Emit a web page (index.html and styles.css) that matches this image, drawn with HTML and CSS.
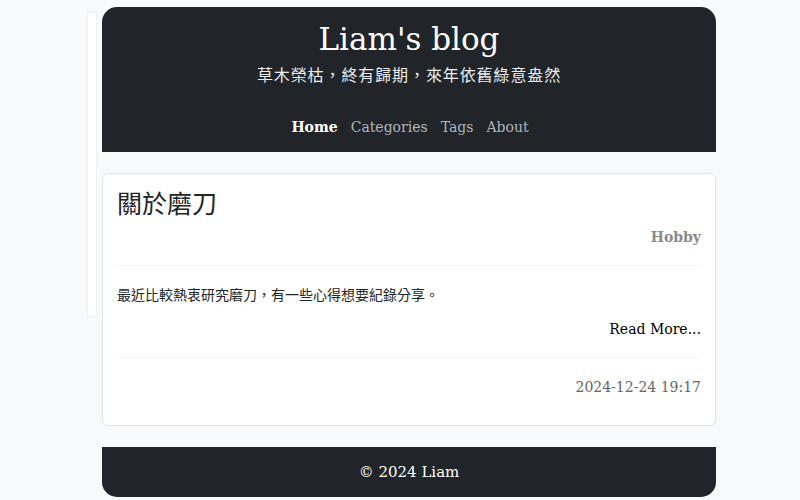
FILE: index.html
```html
<!DOCTYPE html>
<html lang="zh-Hant">
<head>
<meta charset="utf-8">
<title>Liam's blog</title>
<link rel="stylesheet" href="styles.css">
</head>
<body>
<div class="page">
  <div class="strip"></div>
  <div class="main">
    <header class="header">
      <h1 class="site-title">Liam's blog</h1>
      <p class="site-sub">草木榮枯，終有歸期，來年依舊綠意盎然</p>
      <nav class="nav">
        <a class="nav-link active" href="#">Home</a>
        <a class="nav-link" href="#">Categories</a>
        <a class="nav-link" href="#">Tags</a>
        <a class="nav-link" href="#">About</a>
      </nav>
    </header>
    <article class="card">
      <h2 class="post-title">關於磨刀</h2>
      <div class="post-cat">Hobby</div>
      <hr class="rule">
      <p class="post-excerpt">最近比較熱衷研究磨刀，有一些心得想要紀錄分享。</p>
      <div class="read-more"><a href="#">Read More...</a></div>
      <hr class="rule">
      <div class="post-date">2024-12-24 19:17</div>
    </article>
    <footer class="footer">© 2024 Liam</footer>
  </div>
</div>
</body>
</html>
```
FILE: styles.css
```css
* { box-sizing: border-box; }
html, body { margin: 0; padding: 0; }
body {
  background: #f8f9fa;
  font-family: "DejaVu Serif", "Noto Sans CJK TC", serif;
  color: #212529;
  width: 800px;
  height: 500px;
  overflow: hidden;
}
.page {
  display: flex;
  justify-content: center;
  gap: 5px;
  padding-top: 7px;
  padding-left: 3px;
}
.strip {
  width: 10px;
  height: 305px;
  margin-top: 5px;
  background: #fff;
  border: 1px solid #f0f1f2;
}
.main {
  width: 614px;
  display: flex;
  flex-direction: column;
}
.header {
  background: #212529;
  border-radius: 15px 15px 0 0;
  height: 145px;
  text-align: center;
  color: #fff;
  padding-top: 12px;
}
.site-title {
  margin: 0;
  font-weight: normal;
  font-size: 31px;
  line-height: 40px;
}
.site-sub {
  margin: 3px 0 0;
  font-family: "Noto Sans CJK TC", sans-serif;
  font-size: 16px;
  line-height: 24px;
  color: #e9ecef;
  letter-spacing: 0.9px;
}
.nav {
  display: flex;
  justify-content: center;
  gap: 13px;
  margin-top: 29px;
  padding-left: 2px;
}
.nav-link {
  color: #adb5bd;
  text-decoration: none;
  font-size: 14px;
  line-height: 24px;
}
.nav-link.active { color: #fff; font-weight: bold; }
.card {
  margin-top: 21px;
  background: #fff;
  border: 1px solid #dee2e6;
  border-radius: 6px;
  padding: 11px 14px 0 14px;
  height: 253px;
}
.post-title {
  margin: 0;
  font-family: "Noto Sans CJK TC", sans-serif;
  font-weight: normal;
  font-size: 25px;
  line-height: 34px;
  color: #212529;
}
.post-cat {
  text-align: right;
  color: #8a8a8a;
  font-weight: bold;
  font-size: 14px;
  line-height: 22px;
  margin-top: 7px;
}
.rule {
  border: 0;
  border-top: 1px solid #f1f3f5;
  margin: 17px 0 0;
}
.post-excerpt {
  margin: 17px 0 0;
  font-family: "Noto Sans CJK TC", sans-serif;
  font-size: 14px;
  line-height: 22px;
  color: #212529;
}
.read-more {
  text-align: right;
  margin-top: 13px;
  font-size: 14px;
  line-height: 22px;
}
.read-more a { color: #000; text-decoration: none; }
.read-more + .rule { margin-top: 17px; }
.post-date {
  text-align: right;
  color: #666;
  font-size: 14px;
  line-height: 22px;
  margin-top: 18px;
}
.footer {
  margin-top: 21px;
  height: 50px;
  background: #212529;
  color: #fff;
  border-radius: 0 0 15px 15px;
  text-align: center;
  font-size: 15px;
  line-height: 50px;
}
```
